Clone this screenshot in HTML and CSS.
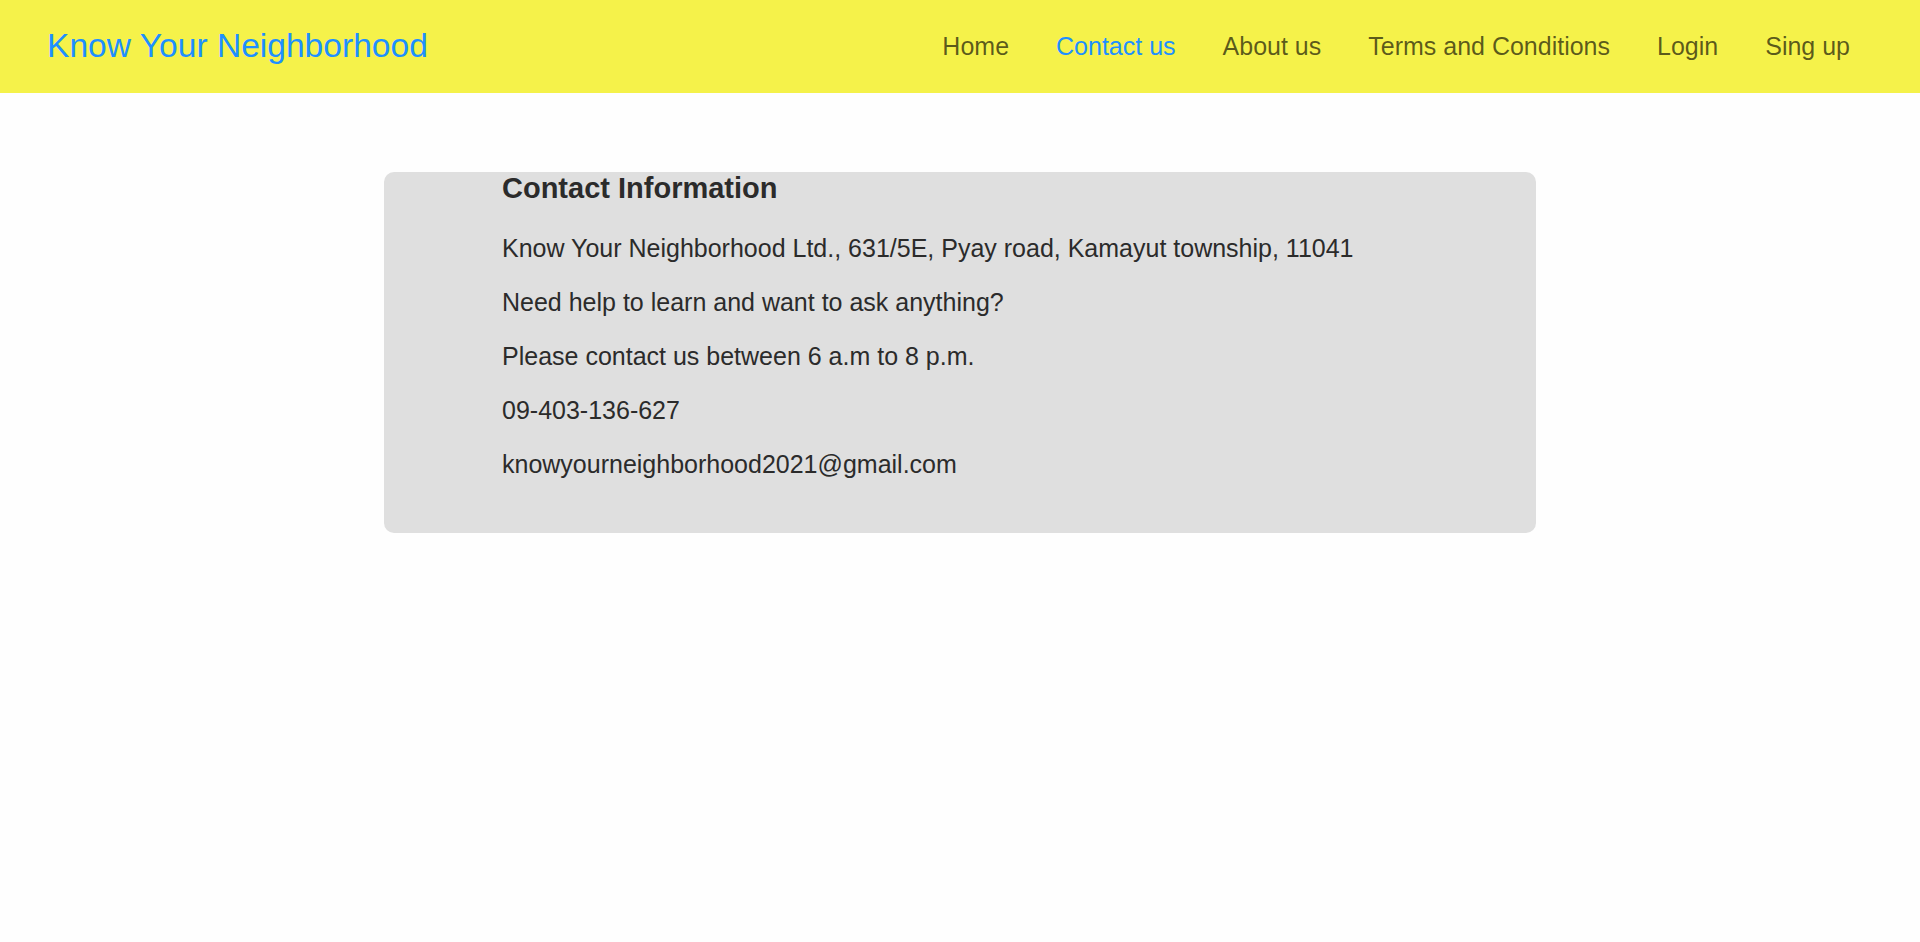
FILE: index.html
```html
<!DOCTYPE html>
<html lang="en">
<head>
<meta charset="utf-8">
<title>Know Your Neighborhood - Contact us</title>
<link rel="stylesheet" href="styles.css">
</head>
<body>
<header class="topbar">
  <a class="brand" href="#">Know Your Neighborhood</a>
  <nav class="nav">
    <a class="nav-link" href="#">Home</a>
    <a class="nav-link active" href="#">Contact us</a>
    <a class="nav-link" href="#">About us</a>
    <a class="nav-link" href="#">Terms and Conditions</a>
    <a class="nav-link" href="#">Login</a>
    <a class="nav-link" href="#">Sing up</a>
  </nav>
</header>
<main class="main">
  <section class="card">
    <h3 class="card-title">Contact Information</h3>
    <p class="line">Know Your Neighborhood Ltd., 631/5E, Pyay road, Kamayut township, 11041</p>
    <p class="line">Need help to learn and want to ask anything?</p>
    <p class="line">Please contact us between 6 a.m to 8 p.m.</p>
    <p class="line">09-403-136-627</p>
    <p class="line">knowyourneighborhood2021@gmail.com</p>
  </section>
</main>
</body>
</html>
```
FILE: styles.css
```css
* { box-sizing: border-box; }
html, body {
  margin: 0;
  padding: 0;
}
body {
  background: #fefefe;
  font-family: "Liberation Sans", Arial, sans-serif;
  color: #2b2b2b;
}
.topbar {
  height: 93px;
  background: #f5f24a;
  display: flex;
  align-items: center;
  justify-content: space-between;
  padding: 0 70px 0 47px;
}
.brand {
  color: #1e90ff;
  font-size: 33.6px;
  text-decoration: none;
  line-height: 1;
  padding-bottom: 1px;
}
.nav {
  display: flex;
  align-items: center;
  gap: 47px;
}
.nav-link {
  color: rgba(0, 0, 0, 0.64);
  font-size: 25px;
  text-decoration: none;
  line-height: 1;
}
.nav-link.active {
  color: #1e90ff;
}
.main {
  padding-top: 79px;
}
.card {
  width: 60%;
  margin: 0 auto;
  background: #dfdfdf;
  border-radius: 10px;
  padding: 0 0 29px 118px;
}
.card-title {
  margin: 0 0 29px;
  font-size: 29px;
  font-weight: bold;
  color: #2b2b2b;
}
.line {
  margin: 25px 0;
  font-size: 25px;
}
.line:first-of-type { margin-top: 0; }
```
